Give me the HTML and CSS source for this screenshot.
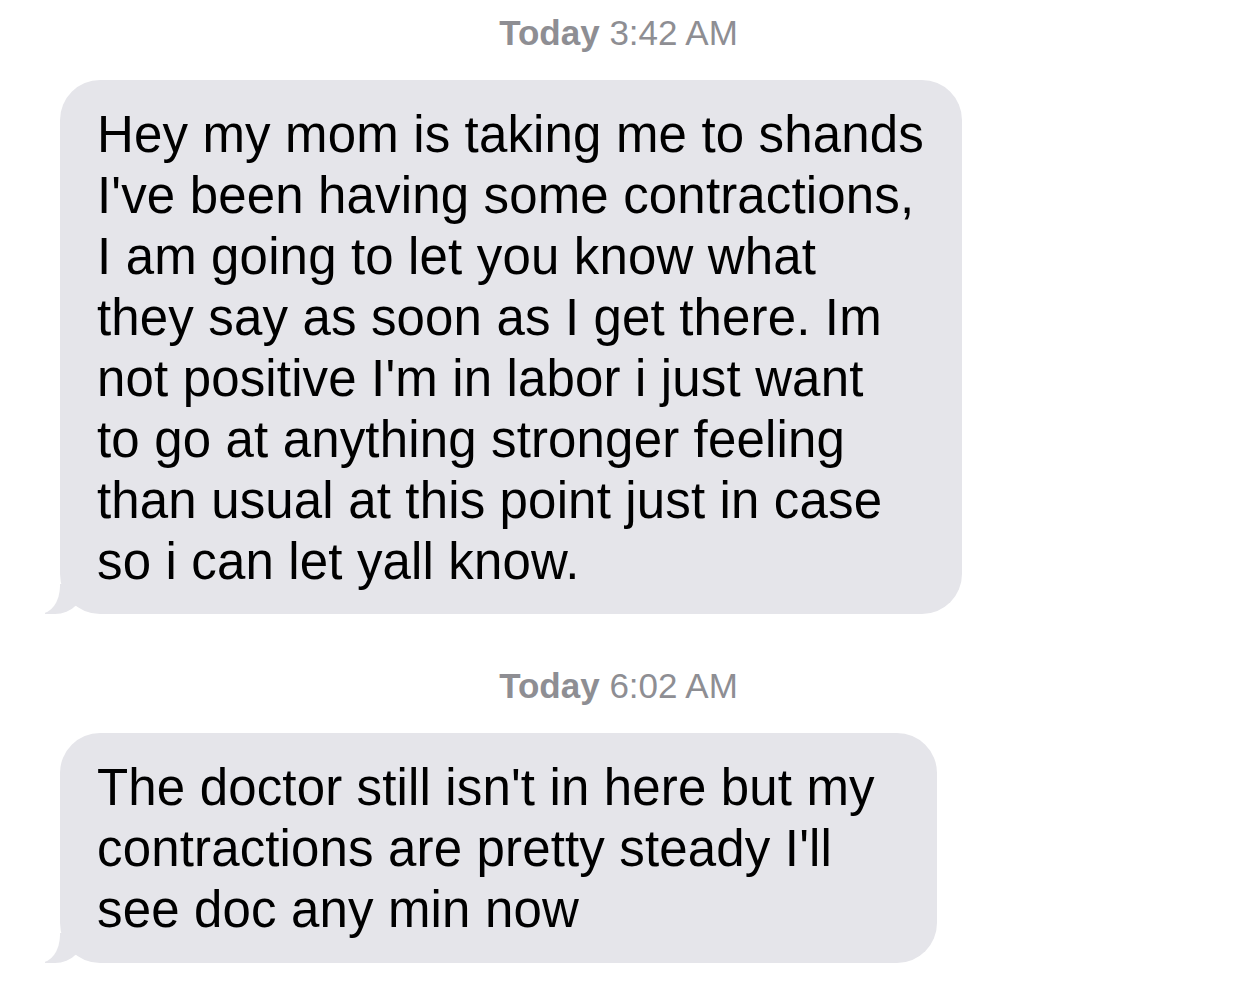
FILE: index.html
```html
<!DOCTYPE html>
<html>
<head>
<meta charset="utf-8">
<link rel="stylesheet" href="styles.css">
</head>
<body>
<div class="thread">
  <div class="stamp"><b>Today</b> 3:42 AM</div>
  <div class="row">
    <div class="bubble b1">Hey my mom is taking me to shands<br>I've been having some contractions,<br>I am going to let you know what<br>they say as soon as I get there. Im<br>not positive I'm in labor i just want<br>to go at anything stronger feeling<br>than usual at this point just in case<br>so i can let yall know.</div>
  </div>
  <div class="stamp s2"><b>Today</b> 6:02 AM</div>
  <div class="row">
    <div class="bubble b2">The doctor still isn't in here but my<br>contractions are pretty steady I'll<br>see doc any min now</div>
  </div>
</div>
</body>
</html>
```
FILE: styles.css
```css
html, body { margin: 0; padding: 0; background: #fff; }
body { width: 1237px; height: 991px; overflow: hidden; font-family: "Liberation Sans", Arial, sans-serif; }
.thread { display: flex; flex-direction: column; }
.stamp { text-align: center; color: #8e8e93; font-size: 35px; line-height: 36px; margin-top: 15px; }
.stamp b { font-weight: 700; }
.s2 { margin-top: 54px; }
.row { display: flex; padding-left: 60px; margin-top: 29px; }
.bubble { position: relative; box-sizing: border-box; background: #e5e5ea; color: #000; font-size: 51px; letter-spacing: 0.15px; line-height: 61px; border-radius: 40px; padding: 24px 0 22px 37px; white-space: nowrap; }
.b1 { width: 902px; }
.b2 { width: 877px; padding-bottom: 23px; }
.bubble::before { content: ""; position: absolute; left: -15px; bottom: 0; width: 40px; height: 30px; background: #e5e5ea; border-bottom-right-radius: 30px 30px; }
.bubble::after { content: ""; position: absolute; left: -30px; bottom: 0; width: 30px; height: 34px; background: #fff; border-bottom-right-radius: 20px 28px; }
```
